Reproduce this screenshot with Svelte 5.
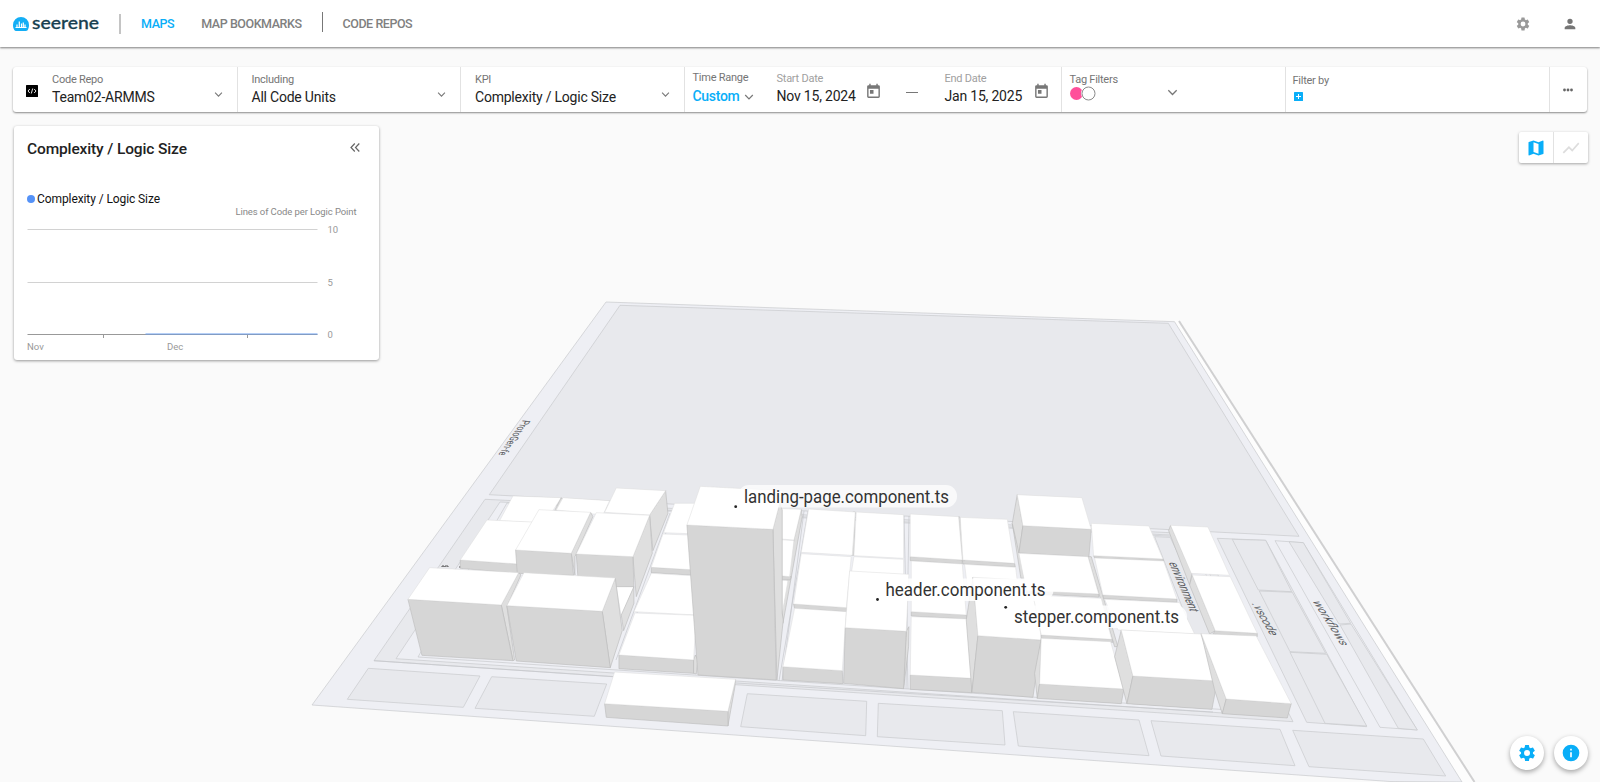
<script>
  const repoCells = [
    { label: 'Code Repo', value: 'Team02-ARMMS', icon: true },
    { label: 'Including', value: 'All Code Units' },
    { label: 'KPI', value: 'Complexity / Logic Size' }
  ];

  // Ground plates, in page pixels: [kind, points]
  const plates = [
    ['rim', '1174,320 1180,321 1475,782 1460,782'],
    ['base', '606,302 1174.5,321.7 1462,782 1390,781.5 312,705'],
    ['plate', '620,305.3 1168.3,323.3 1299,536.3 489.3,494.7'],
    ['plate', '485,499.3 1197,534 1293,721.7 374,660.7'],
    ['base', '500,502 1190,536 1284,717 396,658.7'],
    ['base', '507,503 1187,537 1276,713 418,657'],
    ['plate', '1217.3,538.3 1265.7,540.3 1366.7,726.7 1306.7,722.3'],
    ['plate', '1232.3,539.3 1265.7,540.3 1291.7,591.7 1258.3,590'],
    ['plate', '1259.3,591 1292.3,592.3 1325.7,653.3 1290,651.7'],
    ['plate', '1290,652.3 1326.7,654.3 1366.7,726 1325,723.3'],
    ['base', '1275,540.7 1303.3,542.7 1417.3,730 1380,727.3'],
    ['plate', '1289,541.7 1303.3,542.7 1350.7,623.3 1339,624'],
    ['plate', '1340,625 1351,624 1417.3,730 1398.3,728.3'],
    ['plate', '368.3,668.3 480,676 463.3,707.3 347.3,699.3'],
    ['plate', '491.7,676.7 606.7,684 594.3,716.3 475,708.3'],
    ['plate', '747.3,693.7 866.7,701.3 865.7,735.7 740.7,726.7'],
    ['plate', '878.3,703.3 1002.3,710.7 1005,745 877.3,736.7'],
    ['plate', '1013.3,711.7 1139,720 1149,755.7 1018.3,746'],
    ['plate', '1151,720.7 1280,729.3 1295,765.7 1161,756'],
    ['plate', '1292.7,730.3 1423.3,739 1445.7,776 1309,766.7']
  ];

  // Buildings by district; each district has its own origin and a unit of a third of a pixel.
  const districts = [
    {
      x: 299.6, y: 460,
      faces: [
        ['top', '640,108 785,113 735,190 600,182'],
        ['side', '785,113 790,120 772,152 765,152'],
        ['top', '790,113 930,122 910,165 770,150'],
        ['side', '1098,92 1105,160 1060,272 1050,165'],
        ['top', '950,84 1098,92 1050,165 915,157'],
        ['front', '482,300 655,312 655,340 482,325'],
        ['top', '562,180 720,187 655,312 482,300'],
        ['side', '873,157 880,170 826,290 826,345 815,280'],
        ['front', '648,270 815,280 822,346 653,340'],
        ['top', '718,149 873,157 815,280 648,270'],
        ['top', '950,378 1003,380 965,470'],
        ['side', '1003,380 1003,430 972,512 965,465'],
        ['side', '1050,166 1058,280 1010,410 1000,290'],
        ['front', '830,282 1000,290 1003,380 950,380 835,352'],
        ['top', '890,158 1050,166 1000,290 830,282'],
        ['side', '657,338 664,345 622,440 645,600 640,602 605,435'],
        ['front', '325,418 605,435 640,602 367,586'],
        ['top', '390,323 657,338 605,435 325,418'],
        ['side', '947,354 968,512 932,623 908,454'],
        ['front', '622,437 908,454 932,623 650,603'],
        ['top', '673,338 947,354 908,454 622,437'],
        ['top', '1125,130 1190,130 1190,222 1092,218'],
        ['front', '1055,322 1190,330 1190,346 1055,338'],
        ['top', '1090,222 1190,226 1190,330 1055,322'],
        ['top', '1055,340 1190,348 1190,465 1003,455'],
        ['front', '958,585 1182,600 1182,640 958,626'],
        ['side', '1187,585 1195,600 1190,642 1182,640 1182,600'],
        ['top', '1006,459 1190,466 1182,600 958,585'],
        ['side', '1308,658 1306,680 1285,798 1285,754'],
        ['front', '915,731 1285,754 1285,798 920,772'],
        ['top', '945,636 1308,658 1285,754 915,731']
      ]
    },
    {
      x: 659.6, y: 460,
      faces: [
        ['side', '425,148 428,170 370,490 368,450 403,240'],
        ['front', '350,346 395,350 392,360 350,358'],
        ['top', '350,145 425,148 403,240 350,236'],
        ['top', '350,238 403,242 390,350 350,346'],
        ['top', '350,360 385,362 368,460'],
        ['side', '340,208 360,130 368,150 368,460 371,480 352,660'],
        ['front', '82,195 340,208 350,660 115,645'],
        ['top', '122,79 370,92 340,208 82,195'],
        ['side', '587,156 583,286 576,286 580,156'],
        ['top', '447,147 587,156 578,286 425,277'],
        ['top', '590,156 732,164 732,295 583,287'],
        ['front', '402,432 562,443 560,455 405,445'],
        ['top', '425,281 575,290 560,443 402,432'],
        ['top', '583,290 732,298 732,350 575,340'],
        ['front', '370,620 548,632 550,671 370,660'],
        ['top', '405,445 560,455 548,632 370,620'],
        ['side', '740,514 748,500 747,560 732,686'],
        ['front', '557,503 740,514 732,686 552,670'],
        ['top', '570,333 748,343 740,514 557,503'],
        ['front', '752,290 908,300 908,312 752,302'],
        ['front', '908,300 1065,310 1067,321 910,312'],
        ['side', '897,170 902,172 915,302 908,302'],
        ['top', '752,162 897,170 908,300 752,290'],
        ['top', '902,172 1043,178 1065,310 910,300'],
        ['front', '755,455 920,465 922,477 755,468'],
        ['top', '755,303 908,312 920,465 755,455'],
        ['top', '915,313 1068,322 1080,420 927,410'],
        ['front', '752,645 937,655 937,698 752,688'],
        ['top', '755,470 925,477 937,655 752,645'],
        ['side', '940,352 955,527 937,697 920,480'],
        ['front', '955,527 1145,540 1120,712 937,697'],
        ['top', '940,352 1125,362 1145,540 955,527']
      ]
    },
    {
      x: 979.6, y: 460,
      faces: [
        ['plate', '525,230 572,232 710,524 640,524'],
        ['side', '325,290 335,290 415,560 405,560'],
        ['side', '98,190 125,290 133,355 124,355'],
        ['side', '113,104 130,197 118,279 98,190'],
        ['front', '130,197 335,208 328,290 118,279'],
        ['top', '113,104 307,113 335,208 130,197'],
        ['front', '342,287 550,297 552,303 345,294'],
        ['top', '335,190 508,198 550,297 342,287'],
        ['front', '140,390 357,402 357,412 140,400'],
        ['top', '118,280 325,290 357,402 140,392'],
        ['front', '370,405 592,417 592,427 372,416'],
        ['top', '345,294 552,303 592,417 370,405'],
        ['front', '185,525 398,538 400,547 185,535'],
        ['top', '160,405 365,415 396,538 185,525'],
        ['top', '375,418 600,428 645,522 415,510'],
        ['side', '573,196 567,212 630,375 637,342'],
        ['top', '573,196 685,201 750,346 635,340'],
        ['side', '638,345 630,375 690,522 707,512'],
        ['front', '707,512 833,520 833,530 700,522'],
        ['top', '638,345 752,350 833,520 707,512'],
        ['side', '185,535 180,672 173,715 165,640'],
        ['front', '180,672 433,687 425,731 173,715'],
        ['top', '185,535 393,545 433,687 180,672'],
        ['side', '425,510 460,648 442,731 405,590'],
        ['front', '460,648 713,663 697,748 442,731'],
        ['top', '425,510 663,522 713,663 460,648'],
        ['side', '665,521 740,717 728,761 705,690'],
        ['front', '740,717 935,731 923,774 728,761'],
        ['top', '665,521 830,528 935,731 740,717']
      ]
    }
  ];

  const roads = [
    '670,513 616,660', '672,516 620,660', '804,511 782,681', '808,511 779,681',
    '904,516 908,689', '909,516 906,689', '374,660.7 613,676.7', '736,683 1213,712'
  ];

  const streetNames = [
    { text: 'ProtoGen-fe', m: '-0.58 0.815 -1 -0.1 523 420', size: 11, len: 43 },
    { text: 'environment', m: '0.4 0.91 -0.98 -0.1 1168.5 562', size: 14, len: 54 },
    { text: '.vscode', m: '0.5 0.86 -0.95 -0.1 1251.5 603', size: 14, len: 37 },
    { text: 'workflows', m: '0.545 0.84 -0.95 -0.1 1312 600.5', size: 14, len: 53 }
  ];

  const pins = [
    { text: 'landing-page.component.ts', x: 744, y: 502.5, len: 205, px: 735.7, py: 506.7, o: 0.72 },
    { text: 'header.component.ts', x: 885.5, y: 596, len: 160, px: 877.5, py: 599.5, o: 0.85 },
    { text: 'stepper.component.ts', x: 1014, y: 623, len: 165, px: 1005.7, py: 607.3, o: 0.85 }
  ];
  const cog = 'M19.14 12.94c.04-.3.06-.61.06-.94s-.02-.64-.07-.94l2.03-1.58a.5.5 0 0 0 .12-.61l-1.92-3.32a.5.5 0 0 0-.59-.22l-2.39.96a7 7 0 0 0-1.62-.94l-.36-2.54a.5.5 0 0 0-.48-.41h-3.84a.5.5 0 0 0-.47.41l-.36 2.54a7.4 7.4 0 0 0-1.62.94l-2.39-.96a.5.5 0 0 0-.59.22L2.74 8.87a.5.5 0 0 0 .12.61l2.03 1.58a6 6 0 0 0 0 1.88l-2.03 1.58a.5.5 0 0 0-.12.61l1.92 3.32c.12.22.37.29.59.22l2.39-.96c.5.38 1.03.7 1.62.94l.36 2.54c.05.24.24.41.48.41h3.84c.24 0 .44-.17.47-.41l.36-2.54a7 7 0 0 0 1.62-.94l2.39.96c.22.08.47 0 .59-.22l1.92-3.32a.5.5 0 0 0-.12-.61zM12 15.6a3.6 3.6 0 1 1 0-7.2 3.6 3.6 0 0 1 0 7.2z';
</script>

{#snippet chevron(size)}
  <svg class="chev" width={size} height={size} viewBox="0 0 10 10"><path d="M1.2 3 5 6.8 8.8 3" /></svg>
{/snippet}

{#snippet calendar()}
  <svg class="cal" width="17" height="17" viewBox="0 0 24 24"><path d="M19 3h-1V1h-2v2H8V1H6v2H5a2 2 0 0 0-2 2v14c0 1.1.9 2 2 2h14a2 2 0 0 0 2-2V5a2 2 0 0 0-2-2zm0 16H5V8h14v11zM7 10h5v5H7z" /></svg>
{/snippet}

<div class="page">
  <svg class="map" viewBox="0 0 1600 782" width="1600" height="782">
    {#each plates as [kind, points]}
      <polygon class={kind} {points} />
    {/each}
    <path class="edge" d="M1179 321 1474.500 782" />
    {#each roads as points}
      <polyline class="road" {points} />
    {/each}
    <path class="scrap" d="M442 567v-1h2v1M445 567v-1h3v1M460 568v-2" />
    {#each districts as d}
      <g transform="translate({d.x} {d.y}) scale(0.33333)">
        {#each d.faces as [kind, points]}
          <polygon class={kind} {points} />
        {/each}
      </g>
    {/each}
    {#each streetNames as s}
      <text class="street" transform="matrix({s.m})" font-size={s.size} textLength={s.len} lengthAdjust="spacingAndGlyphs">{s.text}</text>
    {/each}
    {#each pins as p}
      <rect x={p.x - 6} y={p.y - 17.5} width={p.len + 14} height="22.500" rx="11" fill="#fff" fill-opacity={p.o} />
    {/each}
    {#each pins as p}
      <circle cx={p.px} cy={p.py} r="1.400" fill="#222" />
      <text class="pin" x={p.x} y={p.y} textLength={p.len} lengthAdjust="spacingAndGlyphs">{p.text}</text>
    {/each}
  </svg>

  <header>
    <div class="logo">
      <svg width="16" height="14" viewBox="0 0 16 14">
        <path d="M1.300 13C.3 11.500 0 9.700 0 8a8 8 0 0 1 16 0c0 1.700-.3 3.500-1.300 5-.4.700-1 .9-1.700.9H3c-.7 0-1.300-.2-1.700-.9z" fill="#13aef5" />
        <path d="M2.500 10.500h11M4 10V7.500M6.300 10V4.500M8.500 10V6.500M10.300 10V5.500M12 10V7.500" stroke="#fff" stroke-width="1.200" fill="none" />
      </svg>
      <svg class="word" width="74" height="24" viewBox="0 0 74 24"><text x="0" y="16.500" textLength="67" lengthAdjust="spacingAndGlyphs">seerene</text></svg>
    </div>
    <i class="bar soft"></i>
    <nav>
      <a class="on">MAPS</a>
      <a>MAP BOOKMARKS</a>
      <i class="bar"></i>
      <a>CODE REPOS</a>
    </nav>
    <div class="tools">
      <svg width="16" height="16" viewBox="0 0 24 24" fill="#999"><path d={cog} /></svg>
      <svg width="16" height="16" viewBox="0 0 24 24" fill="#757575"><path d="M12 12a4 4 0 1 0 0-8 4 4 0 0 0 0 8zm0 2c-2.700 0-8 1.300-8 4v2h16v-2c0-2.700-5.300-4-8-4z" /></svg>
    </div>
  </header>

  <section class="filters">
    {#each repoCells as c}
      <div class="cell repo">
        {#if c.icon}
          <svg class="code" width="12" height="12" viewBox="0 0 12 12"><rect width="12" height="12" rx="0.500" /><path d="M3.800 4 2 6l1.800 2M8.200 4 10 6 8.200 8M6.700 3.500 5.300 8.500" fill="none" stroke="#fff" stroke-width="0.900" /></svg>
        {/if}
        <div class="field"><span class="label">{c.label}</span><span class="value">{c.value}</span></div>
        {@render chevron(9)}
      </div>
    {/each}
    <div class="cell time">
      <div class="field range"><span class="label">Time Range</span><span class="custom">Custom {@render chevron(10)}</span></div>
      <div class="field date"><span class="label pale">Start Date</span><span class="value">Nov 15, 2024</span></div>
      {@render calendar()}
      <i class="dash"></i>
      <div class="field date"><span class="label pale">End Date</span><span class="value">Jan 15, 2025</span></div>
      {@render calendar()}
    </div>
    <div class="cell tags">
      <div class="field"><span class="label">Tag Filters</span>
        <svg width="27" height="15" viewBox="0 0 27 15"><circle cx="6.500" cy="7.500" r="6.500" fill="#ff4f9a" /><circle cx="18.500" cy="7.500" r="7.500" fill="#fff" /><circle cx="18.500" cy="7.500" r="6.500" fill="#fff" stroke="#8a8a8a" /></svg>
      </div>
      {@render chevron(11)}
    </div>
    <div class="cell by">
      <div class="field"><span class="label">Filter by</span>
        <svg class="plus" width="9" height="9" viewBox="0 0 9 9"><rect width="9" height="9" rx="0.500" fill="#09aef8" /><path d="M4.500 2v5M2 4.500h5" stroke="#fff" /></svg>
      </div>
    </div>
    <div class="cell more"><svg width="10" height="4" viewBox="0 0 10 4" fill="#666"><circle cx="1.500" cy="2" r="1.400" /><circle cx="5" cy="2" r="1.400" /><circle cx="8.500" cy="2" r="1.400" /></svg></div>
  </section>

  <main>
    <section class="card">
      <div class="head">
        <h2>Complexity / Logic Size</h2>
        <svg width="10" height="9" viewBox="0 0 10 9" fill="none" stroke="#666" stroke-width="1.200"><path d="M4.800.5 1 4.500l3.800 4M9.300.5l-3.800 4 3.800 4" /></svg>
      </div>
      <div class="legend"><i></i>Complexity / Logic Size</div>
      <svg class="chart" width="352" height="154" viewBox="0 0 352 154">
        <g class="small">
          <text x="221.500" y="10" class="unit" textLength="121">Lines of Code per Logic Point</text>
          <text x="313.500" y="28">10</text><text x="313.500" y="81">5</text><text x="313.500" y="133">0</text>
          <text x="13" y="145">Nov</text><text x="153" y="145">Dec</text>
        </g>
        <path d="M13.500 24.500H303.500M13.500 77.500H303.500" stroke="#d2d2d2" />
        <path d="M13.500 129.500H303.500M89.500 129v4M233.500 129v4" stroke="#999" />
        <path d="M131.500 129H303.500" stroke="#6da0f0" />
      </svg>
    </section>
    <div class="switch">
      <div><svg width="20" height="20" viewBox="0 0 24 24" fill="#09aef8"><path d="m20.500 3-.16.030L15 5.100 9 3 3.360 4.900a.5.5 0 0 0-.36.480V20.500c0 .28.22.5.5.5l.16-.03L9 18.900l6 2.100 5.640-1.900a.5.5 0 0 0 .36-.48V3.500a.5.5 0 0 0-.5-.5zM15 19l-6-2.110V5l6 2.110V19z" /></svg></div>
      <div><svg width="20" height="20" viewBox="0 0 24 24" fill="#ddd"><path d="m3.500 18.490 6-6.010 4 4L22 6.920l-1.410-1.410-7.090 7.970-4-4L2 16.990z" /></svg></div>
    </div>
  </main>

  <div class="fabs">
    <div><svg width="20" height="20" viewBox="0 0 24 24" fill="#09aef8"><path d={cog} /></svg></div>
    <div><svg width="20" height="20" viewBox="0 0 24 24" fill="#09aef8"><path d="M12 2a10 10 0 1 0 0 20 10 10 0 0 0 0-20zm1 15h-2v-6h2v6zm0-8h-2V7h2v2z" /></svg></div>
  </div>
</div>

<style>
  :global(body) { margin: 0; background: #fafafa; overflow: hidden; }
  .page { position: relative; width: 1600px; height: 782px; overflow: hidden; background: #fafafa; font-family: Roboto, sans-serif; color: #222; box-sizing: border-box; }
  .page * { box-sizing: border-box; }
  svg { display: block; flex: none; }
  .map { position: absolute; left: 0; top: 0; }
  polygon { stroke-width: 0.7; stroke-linejoin: round; vector-effect: non-scaling-stroke; }
  .base { fill: #eeeff4; stroke: #c9cacd; }
  .plate { fill: #e8e9ed; stroke: #c9cacd; }
  .rim { fill: #fdfdfd; stroke: none; }
  .top { fill: #fff; stroke: #dcdcdc; stroke-width: 0.5; }
  .front { fill: #d6d6d6; stroke: #bbb; stroke-width: 0.6; }
  .side { fill: #dfdfdf; stroke: #b8b8b8; stroke-width: 0.6; }
  .edge { stroke: #d0d0d1; stroke-width: 2; }
  .road { fill: none; stroke: #c6c7cb; stroke-width: 0.7; }
  .scrap { fill: none; stroke: #555; stroke-width: 1; }
  .street { fill: #5a5c61; }
  .pin { font-size: 18px; fill: #333; }

  header { position: relative; display: flex; align-items: center; height: 47px; padding: 0 22px 0 13px; background: #fff; box-shadow: 0 1px 2px rgba(0, 0, 0, 0.5); }
  .logo { display: flex; align-items: center; gap: 3px; width: 106px; }
  .word text { font: 500 17px Lato, sans-serif; fill: #173f50; stroke: #173f50; stroke-width: 0.300px; }
  .bar { width: 1px; height: 20px; background: #777; }
  .bar.soft { width: 2px; background: #c4c4c4; }
  nav { display: flex; align-items: center; margin-left: 20px; font-size: 12.500px; font-weight: 500; letter-spacing: -0.450px; color: #808080; }
  nav a { margin-right: 27px; white-space: nowrap; }
  nav .on { color: #09aef8; letter-spacing: -0.400px; }
  nav .bar { margin: -3px 20px 0 -7px; }
  .tools { display: flex; gap: 31px; margin-left: auto; }

  .filters { position: relative; display: flex; margin: 20px 13px 0 13px; height: 45px; background: #fff; border-radius: 3px; box-shadow: 0 1px 2px rgba(0, 0, 0, 0.45); }
  .cell { position: relative; display: flex; align-items: center; border-right: 1px solid #e2e2e2; }
  .repo { width: 223.500px; padding: 0 14px 0 14px; }
  .repo:first-child { width: 224.500px; padding-left: 15px; }
  .repo .field { flex: 1; }
  .code { margin: 3px 14px 0 -2px; }
  .field { display: flex; flex-direction: column; white-space: nowrap; }
  .label { font-size: 11px; line-height: 14px; letter-spacing: -0.250px; color: #757575; }
  .label.pale { color: #a0a0a0; }
  .value { font-size: 14px; line-height: 20px; letter-spacing: -0.200px; }
  .repo .value { letter-spacing: -0.220px; }
  .chev { fill: none; stroke: #777; stroke-width: 1.200; margin-top: 9px; }
  .time { width: 377px; padding: 0 0 0 8px; }
  .range { width: 84px; padding-top: 0; }
  .custom { display: flex; gap: 5px; font-size: 14px; line-height: 23px; letter-spacing: -0.300px; font-weight: 500; color: #09aef8; }
  .custom .chev { margin-top: 7px; }
  .date { width: 88px; margin-top: -2px; }
  .cal { fill: #777; margin-top: 4px; }
  .dash { width: 12px; height: 1px; background: #777; margin: 6px 27px 0 24px; }
  .tags { width: 224px; padding-left: 8px; }
  .tags .field { width: 97px; margin-top: -5px; }
  .tags .field svg { margin-top: -1px; }
  .tags .chev { margin-top: 5px; }
  .by { width: 264px; padding-left: 7px; }
  .by .field { margin-top: -5px; gap: 4px; }
  .plus { margin-left: 1px; }
  .more { flex: 1; justify-content: center; border: 0; }

  main { position: relative; display: flex; justify-content: space-between; align-items: flex-start; padding: 14px 12px 0 14px; }
  .card { width: 365px; height: 234px; background: #fff; border-radius: 3px; box-shadow: 0 1px 3px rgba(0, 0, 0, 0.4); }
  .head { display: flex; justify-content: space-between; align-items: center; padding: 13px 19px 0 13px; }
  .head svg { margin-top: -4px; }
  h2 { margin: 0; font-size: 15.500px; line-height: 20px; font-weight: 500; letter-spacing: -0.130px; }
  .legend { display: flex; align-items: center; gap: 2px; margin: 32px 0 0 13px; font-size: 12px; line-height: 16px; letter-spacing: -0.090px; color: #111; }
  .legend i { width: 8px; height: 8px; border-radius: 50%; background: #5592f7; }
  .chart { margin-top: -2px; }
  .small { font-size: 9.500px; fill: #999; }
  .unit { fill: #888; }
  .switch { display: flex; margin-top: 6px; background: #fff; border-radius: 2px; box-shadow: 0 1px 3px rgba(0, 0, 0, 0.35); }
  .switch div { width: 34px; height: 31px; display: grid; place-items: center; }
  .switch div:first-child { border-right: 1px solid #e2e2e2; width: 35px; }
  .fabs { position: absolute; right: 12.500px; bottom: 12.500px; display: flex; gap: 10px; }
  .fabs div { width: 34px; height: 34px; border-radius: 50%; background: #fff; display: grid; place-items: center; box-shadow: 0 2px 5px rgba(0, 0, 0, 0.35); }
</style>
